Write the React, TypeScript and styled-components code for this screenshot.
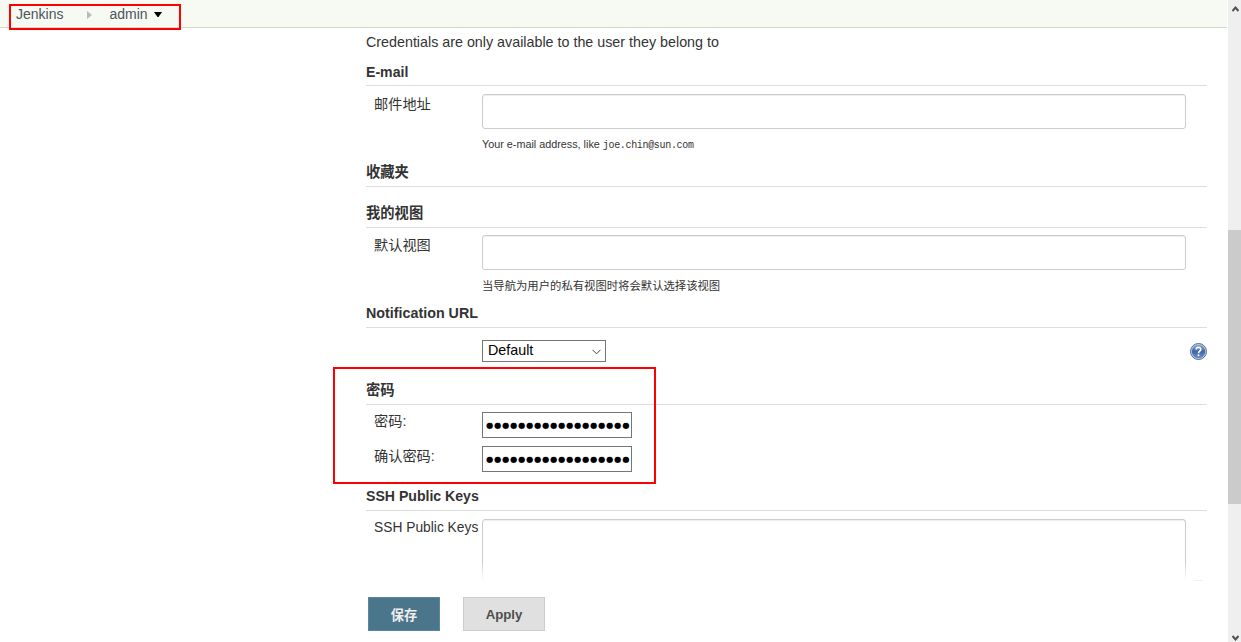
import React from 'react';
import styled, { createGlobalStyle } from 'styled-components';

const GlobalStyle = createGlobalStyle`
  * { box-sizing: border-box; }
  body {
    margin: 0;
    background: #fff;
    color: #333;
    font-family: "Liberation Sans", "Noto Sans CJK SC", sans-serif;
    font-size: 14.3px;
    overflow: hidden;
  }
`;

const Window = styled.div`
  position: relative;
  display: flex;
  height: 642px;
  width: 1241px;
  overflow: hidden;
`;

const Page = styled.div`
  display: flex;
  flex-direction: column;
  width: 1228px;
  height: 100%;
`;

const Breadcrumbs = styled.nav`
  display: flex;
  align-items: center;
  width: 1227px;
  height: 28px;
  padding: 0 0 0 16px;
  background: #f6faf2;
  border-bottom: 1px solid #d3d7cf;
  color: #4d545d;
  font-size: 14px;
  flex: none;
`;

const Crumb = styled.span`
  height: 27px;
  line-height: 28px;
`;

const CrumbArrow = styled.svg`
  margin: 2px 17px 0 24px;
`;

const MenuArrow = styled.svg`
  margin: 2px 0 0 6px;
`;

const Main = styled.main`
  width: 841px;
  margin-left: 366px;
`;

const Intro = styled.p`
  margin: 0;
  height: 30px;
  line-height: 28px;
`;

const Heading = styled.h2<{ $line?: number; $size?: number }>`
  margin: 0;
  height: 28px;
  border-bottom: 1px solid #ddd;
  font-size: ${(p) => p.$size ?? 14.3}px;
  line-height: ${(p) => p.$line ?? 26}px;
`;

const SectionBody = styled.div<{ $height: number; $top?: number }>`
  height: ${(p) => p.$height}px;
  padding-top: ${(p) => p.$top ?? 8}px;
`;

const Row = styled.div<{ $gap?: number }>`
  display: flex;
  align-items: flex-start;
  margin-bottom: ${(p) => p.$gap ?? 0}px;
`;

const Label = styled.label<{ $line?: number; $size?: number }>`
  width: 116px;
  padding-left: 8px;
  font-size: ${(p) => p.$size ?? 14.2}px;
  line-height: ${(p) => p.$line ?? 20}px;
  white-space: nowrap;
  flex: none;
`;

const Field = styled.div`
  width: 704px;
`;

const TextBox = styled.div`
  height: 35px;
  border: 1px solid #ccc;
  border-radius: 3px;
  box-shadow: inset 0 1px 1px rgba(0, 0, 0, 0.075);
`;

const Help = styled.div<{ $size: number; $line?: number }>`
  margin-top: 6px;
  height: 18px;
  line-height: ${(p) => p.$line ?? 19}px;
  font-size: ${(p) => p.$size}px;
  white-space: nowrap;
`;

const Code = styled.code`
  display: inline-block;
  font-family: "Liberation Mono", monospace;
  font-size: 10px;
  letter-spacing: -0.33px;
`;

const Select = styled.div`
  display: flex;
  justify-content: space-between;
  align-items: center;
  width: 124px;
  height: 22px;
  padding: 0 4px 0 5px;
  border: 1px solid #767676;
  color: #000;
  line-height: 19px;
`;

const SelectText = styled.span`
  height: 20px;
`;

const SelectArrow = styled.svg`
  margin-top: 2px;
`;

const HelpIcon = styled.svg`
  margin: 3px 0 0 auto;
`;

const Password = styled.div`
  width: 150px;
  height: 26px;
  padding-left: 3px;
  border: 1px solid #767676;
  color: #000;
  font-family: "DejaVu Sans", sans-serif;
  font-size: 8.4px;
  letter-spacing: 0.7px;
  line-height: 24px;
  white-space: nowrap;
`;

const TextArea = styled.div`
  height: 63px;
  border: 1px solid #ccc;
  border-bottom: 0;
  border-radius: 3px 3px 0 0;
  box-shadow: inset 0 1px 1px rgba(0, 0, 0, 0.075);
  mask-image: linear-gradient(#000 0 42px, transparent 62px);
`;

const FadedEdge = styled.span`
  align-self: flex-end;
  width: 9px;
  height: 2px;
  margin-left: 8px;
  border-top: 1px solid #eef0f5;
  border-radius: 5px;
`;

const Actions = styled.div`
  display: flex;
  gap: 23px;
  padding-left: 2px;
`;

const Button = styled.button<{ $primary?: boolean }>`
  width: ${(p) => (p.$primary ? 72 : 82)}px;
  height: 34px;
  padding: 0;
  border: 1px solid ${(p) => (p.$primary ? '#5788a0' : '#ccc')};
  background: ${(p) => (p.$primary ? '#4b758b' : '#e0e0e0')};
  color: ${(p) => (p.$primary ? '#eee' : '#4d4d4d')};
  font: bold ${(p) => (p.$primary ? 13.2 : 13.2)}px "Liberation Sans", "Noto Sans CJK SC", sans-serif;
`;

const ScrollTrack = styled.div`
  display: flex;
  flex-direction: column;
  align-items: center;
  justify-content: space-between;
  width: 13px;
  height: 100%;
  padding: 6px 0 1px 2px;
  background: #efefef;
`;

const ScrollThumb = styled.div`
  width: 13px;
  height: 274px;
  margin: 218px 0 auto -2px;
  background: #cbcbcb;
`;

const Highlight = styled.div<{ $x: number; $y: number; $w: number; $h: number }>`
  position: absolute;
  left: ${(p) => p.$x}px;
  top: ${(p) => p.$y}px;
  width: ${(p) => p.$w}px;
  height: ${(p) => p.$h}px;
  border: 2px solid #f00;
  pointer-events: none;
`;

const DOTS = '●'.repeat(18);

export default function App() {
  return (
    <Window>
      <GlobalStyle />
      <Page>
        <Breadcrumbs>
          <Crumb>Jenkins</Crumb>
          <CrumbArrow width="5" height="8" viewBox="0 0 5 8"><path d="M0 0L5 4L0 8Z" fill="#bbb" /></CrumbArrow>
          <Crumb>admin</Crumb>
          <MenuArrow width="8" height="5" viewBox="0 0 8 5"><path d="M0 0H8L4.5 5H3.5Z" fill="#000" /></MenuArrow>
        </Breadcrumbs>
        <Main>
          <Intro>Credentials are only available to the user they belong to</Intro>

          <Heading $line={28} $size={14.1}>E-mail</Heading>
          <SectionBody $height={73}>
            <Row>
              <Label>邮件地址</Label>
              <Field>
                <TextBox />
                <Help $size={10.8}>Your e-mail address, like <Code>joe.chin@sun.com</Code></Help>
              </Field>
            </Row>
          </SectionBody>

          <Heading>收藏夹</Heading>
          <SectionBody $height={13} />

          <Heading>我的视图</Heading>
          <SectionBody $height={72} $top={7}>
            <Row>
              <Label $line={21}>默认视图</Label>
              <Field>
                <TextBox />
                <Help $size={11.35} $line={21}>当导航为用户的私有视图时将会默认选择该视图</Help>
              </Field>
            </Row>
          </SectionBody>

          <Heading>Notification URL</Heading>
          <SectionBody $height={49} $top={12}>
            <Row>
              <Label />
              <Select>
                <SelectText>Default</SelectText>
                <SelectArrow width="9" height="6" viewBox="0 0 9 6"><path d="M0.5 0.8L4.5 4.8L8.5 0.8" fill="none" stroke="#444" /></SelectArrow>
              </Select>
              <HelpIcon width="17" height="17" viewBox="0 0 17 17">
                <defs>
                  <linearGradient id="helpFill" x1="0" y1="0" x2="0" y2="1">
                    <stop offset="0" stopColor="#8ba7cf" />
                    <stop offset="0.5" stopColor="#3f68a5" />
                    <stop offset="1" stopColor="#6b90c6" />
                  </linearGradient>
                </defs>
                <circle cx="8.5" cy="8.5" r="8" fill="#c3d0e4" stroke="#4c6c9e" />
                <circle cx="8.5" cy="8.5" r="6.7" fill="url(#helpFill)" />
                <path d="M6.2 6.6C6.2 3.7 10.8 3.7 10.8 6.4C10.8 8.2 8.5 8 8.5 10.2" fill="none" stroke="#fff" strokeWidth="1.6" />
                <circle cx="8.5" cy="12.2" r="1" fill="#fff" />
              </HelpIcon>
            </Row>
          </SectionBody>

          <Heading>密码</Heading>
          <SectionBody $height={78} $top={7}>
            <Row $gap={8}>
              <Label $line={18}>密码:</Label>
              <Password>{DOTS}</Password>
            </Row>
            <Row>
              <Label>确认密码:</Label>
              <Password>{DOTS}</Password>
            </Row>
          </SectionBody>

          <Heading $size={14.1}>SSH Public Keys</Heading>
          <SectionBody $height={86}>
            <Row>
              <Label $size={13.8} $line={17}>SSH Public Keys</Label>
              <Field><TextArea /></Field>
              <FadedEdge />
            </Row>
          </SectionBody>

          <Actions>
            <Button $primary>保存</Button>
            <Button>Apply</Button>
          </Actions>
        </Main>
      </Page>
      <ScrollTrack>
        <svg width="7" height="6" viewBox="0 0 7 6"><path d="M0.5 5L3.5 1.5L6.5 5" fill="none" stroke="#505050" strokeWidth="2" /></svg>
        <ScrollThumb />
        <svg width="7" height="6" viewBox="0 0 7 6"><path d="M0.5 1L3.5 4.5L6.5 1" fill="none" stroke="#505050" strokeWidth="2" /></svg>
      </ScrollTrack>
      <Highlight $x={9} $y={4} $w={172} $h={26} />
      <Highlight $x={333} $y={367} $w={323} $h={117} />
    </Window>
  );
}
